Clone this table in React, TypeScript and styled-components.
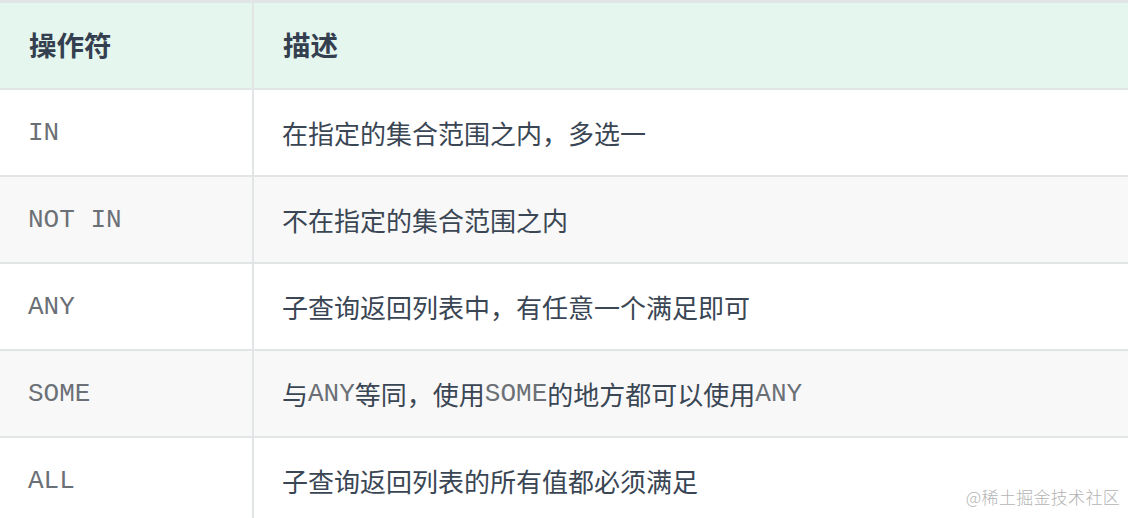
import React from "react";
import styled, { createGlobalStyle } from "styled-components";

const Global = createGlobalStyle`
  html, body { margin: 0; padding: 0; background: #ffffff; }
  body { width: 1128px; height: 518px; overflow: hidden; }
`;

const Page = styled.div`
  position: relative;
  width: 1128px;
  height: 518px;
  overflow: hidden;
  background: #ffffff;
`;

const Table = styled.div`
  width: 1132px;
  border-top: 3px solid #e2e5e6;
  font-family: "Noto Sans CJK SC", "Noto Sans", sans-serif;
`;

const Row = styled.div<{ $bg: string }>`
  display: grid;
  grid-template-columns: 254px 1fr;
  height: 85px;
  background: ${(p) => p.$bg};
  border-bottom: 2px solid #e2e5e6;
`;

const Cell = styled.div<{ $first?: boolean }>`
  display: flex;
  align-items: center;
  padding-left: 28px;
  border-right: ${(p) => (p.$first ? "2px solid #e2e5e6" : "none")};
  font-size: 26px;
  color: #3a4654;
  white-space: nowrap;
`;

const HeadCell = styled(Cell)`
  font-size: 27.5px;
  font-weight: 700;
  color: #34404f;
  padding-left: 29px;
  padding-bottom: 4px;
`;

const Code = styled.span`
  font-family: "Liberation Mono", "Courier New", monospace;
  font-size: 26px;
  color: #6b7076;
`;

const Watermark = styled.div`
  position: absolute;
  right: 8px;
  bottom: 9px;
  font-family: "Noto Sans CJK SC", sans-serif;
  font-size: 17px;
  font-weight: 300;
  color: #b4b4b4;
  letter-spacing: 0.3px;
`;

const rows: { op: string; desc: React.ReactNode }[] = [
  { op: "IN", desc: "在指定的集合范围之内，多选一" },
  { op: "NOT IN", desc: "不在指定的集合范围之内" },
  { op: "ANY", desc: "子查询返回列表中，有任意一个满足即可" },
  {
    op: "SOME",
    desc: (
      <>
        与<Code>ANY</Code>等同，使用<Code>SOME</Code>的地方都可以使用<Code>ANY</Code>
      </>
    ),
  },
  { op: "ALL", desc: "子查询返回列表的所有值都必须满足" },
];

export default function App() {
  return (
    <Page>
      <Global />
      <Table>
        <Row $bg="#e5f6ee">
          <HeadCell $first>操作符</HeadCell>
          <HeadCell>描述</HeadCell>
        </Row>
        {rows.map((r, i) => (
          <Row key={r.op} $bg={i % 2 === 1 ? "#f8f8f8" : "#ffffff"}>
            <Cell $first>
              <Code>{r.op}</Code>
            </Cell>
            <Cell>{r.desc}</Cell>
          </Row>
        ))}
      </Table>
      <Watermark>@稀土掘金技术社区</Watermark>
    </Page>
  );
}
